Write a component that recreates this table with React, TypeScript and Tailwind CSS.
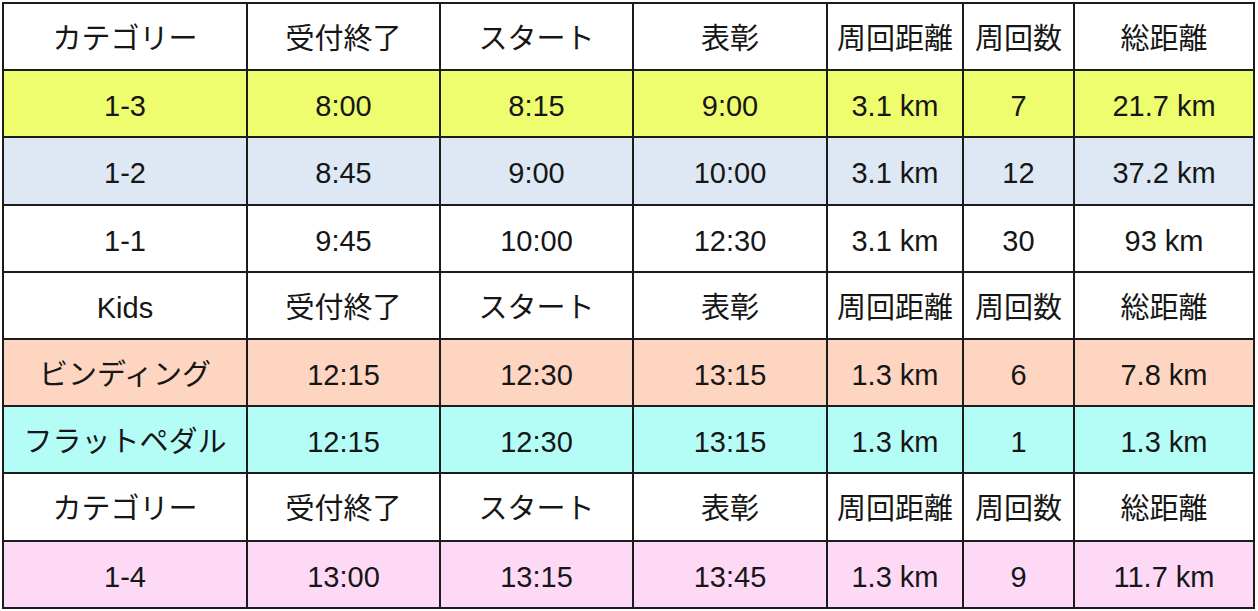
const rows: { bg: string; cells: string[] }[] = [
  { bg: "bg-white", cells: ["カテゴリー", "受付終了", "スタート", "表彰", "周回距離", "周回数", "総距離"] },
  { bg: "bg-[#eefd6d]", cells: ["1-3", "8:00", "8:15", "9:00", "3.1 km", "7", "21.7 km"] },
  { bg: "bg-[#dde8f4]", cells: ["1-2", "8:45", "9:00", "10:00", "3.1 km", "12", "37.2 km"] },
  { bg: "bg-white", cells: ["1-1", "9:45", "10:00", "12:30", "3.1 km", "30", "93 km"] },
  { bg: "bg-white", cells: ["Kids", "受付終了", "スタート", "表彰", "周回距離", "周回数", "総距離"] },
  { bg: "bg-[#fdd5c1]", cells: ["ビンディング", "12:15", "12:30", "13:15", "1.3 km", "6", "7.8 km"] },
  { bg: "bg-[#b4fdf6]", cells: ["フラットペダル", "12:15", "12:30", "13:15", "1.3 km", "1", "1.3 km"] },
  { bg: "bg-white", cells: ["カテゴリー", "受付終了", "スタート", "表彰", "周回距離", "周回数", "総距離"] },
  { bg: "bg-[#fdd9f6]", cells: ["1-4", "13:00", "13:15", "13:45", "1.3 km", "9", "11.7 km"] },
];

const widths = ["w-[244px]", "w-[193px]", "w-[193px]", "w-[194px]", "w-[136px]", "w-[111px]", "w-[180px]"];

export default function App() {
  return (
    <div className="min-h-[611px] bg-white pl-[2px] pt-[2px] font-['Liberation_Sans','Noto_Sans_CJK_JP',sans-serif] text-[#161616]">
      <table className="table-fixed border-collapse">
        <colgroup>
          {widths.map((w, i) => (
            <col key={i} className={w} />
          ))}
        </colgroup>
        <tbody>
          {rows.map((r, i) => (
            <tr key={i} className={`${r.bg} h-[67.2px]`}>
              {r.cells.map((c, j) => (
                <td
                  key={j}
                  className="border-2 border-[#1c1c1c] p-0 pt-[6px] text-center align-middle text-[29px] leading-none whitespace-nowrap"
                >
                  {c}
                </td>
              ))}
            </tr>
          ))}
        </tbody>
      </table>
    </div>
  );
}
